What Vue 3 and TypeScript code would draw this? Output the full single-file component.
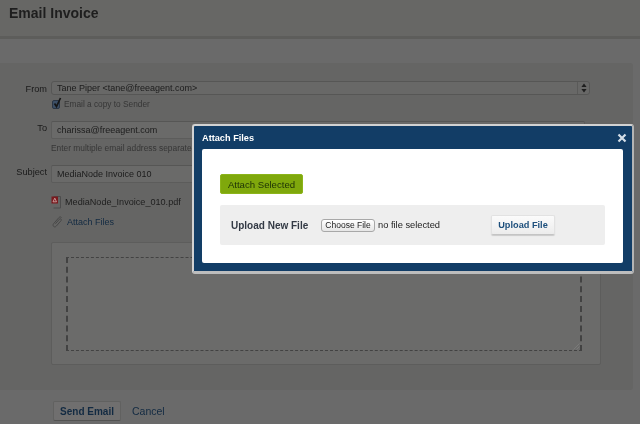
<script setup lang="ts">
import { ref } from 'vue'

const from = ref('Tane Piper <tane@freeagent.com>')
const to = ref('charissa@freeagent.com')
const subject = ref('MediaNode Invoice 010')
const attachment = ref('MediaNode_Invoice_010.pdf')
</script>

<template>
  <div class="page">
    <header class="header">
      <h1>Email Invoice</h1>
    </header>
    <div class="band"></div>

    <section class="panel">
      <div class="row from-row">
        <label>From</label>
        <div class="field">
          <div class="select">
            <span>{{ from }}</span>
            <span class="select-arrows">
              <svg width="6" height="10" viewBox="0 0 6 10"><path d="M3 0.5 L5.6 4 H0.4 Z M3 9.5 L5.6 6 H0.4 Z" fill="#1e1e1e" /></svg>
            </span>
          </div>
          <div class="copy">
            <span class="checkbox">
              <svg width="11" height="13" viewBox="0 0 11 13"><path d="M2.5 6.5 L4.5 9.5 L8.5 1" fill="none" stroke="#161616" stroke-width="1.7" /></svg>
            </span>
            Email a copy to Sender
          </div>
        </div>
      </div>

      <div class="row to-row">
        <label>To</label>
        <div class="field">
          <div class="input">{{ to }}</div>
          <div class="hint">Enter multiple email address separated by commas</div>
        </div>
      </div>

      <div class="row subject-row">
        <label>Subject</label>
        <div class="field">
          <div class="input">{{ subject }}</div>
          <div class="file">
            <svg width="11" height="14" viewBox="0 0 11 14">
              <path d="M2.5 1.5 H9.5 V13 H2.5" fill="none" stroke="#4c4c4c" />
              <rect x="0.5" y="1.5" width="6.5" height="7" fill="#7a1a1e" />
              <path d="M2 6.8 L3.8 3.2 L5.5 6.8 Z" fill="none" stroke="#d9b3b3" stroke-width="0.8" />
            </svg>
            {{ attachment }}
          </div>
          <div class="attach">
            <svg width="11" height="12" viewBox="0 0 11 12">
              <path d="M9.6 1.6 C8.7 0.6 7.6 0.8 6.8 1.7 L1.6 7.7 C0.8 8.7 0.9 9.8 1.7 10.5 C2.5 11.2 3.5 11 4.3 10.1 L9 4.7 C9.5 4.1 9.4 3.4 8.9 3 C8.4 2.6 7.8 2.7 7.3 3.3 L3.4 7.8" fill="none" stroke="#484848" stroke-width="1" />
            </svg>
            <a>Attach Files</a>
          </div>
        </div>
      </div>

      <div class="message">
        <div class="message-inner">
          <svg class="grip" width="7" height="7" viewBox="0 0 7 7"><path d="M0.5 6.5 L6.5 0.5 M3.5 6.5 L6.5 3.5" stroke="#7d7d7d" stroke-width="0.8" /></svg>
        </div>
      </div>
    </section>

    <footer class="footer">
      <button class="send">Send Email</button>
      <a class="cancel">Cancel</a>
    </footer>

    <div class="modal">
      <div class="modal-title">
        <span>Attach Files</span>
        <svg class="close" width="10" height="10" viewBox="0 0 10 10"><path d="M1.5 1.5 L8.5 8.5 M8.5 1.5 L1.5 8.5" stroke="#d5dfe8" stroke-width="2.2" /></svg>
      </div>
      <div class="modal-body">
        <button class="attach-selected">Attach Selected</button>
        <div class="upload">
          <strong>Upload New File</strong>
          <button class="choose">Choose File</button>
          <span class="no-file">no file selected</span>
          <button class="upload-btn">Upload File</button>
        </div>
      </div>
    </div>
  </div>
</template>

<style scoped>
.page {
  position: relative;
  width: 640px;
  height: 424px;
  overflow: hidden;
  display: flex;
  flex-direction: column;
  background: #6a6a6a;
  font-family: "Liberation Sans", Arial, sans-serif;
  font-size: 9px;
  color: #1c1c1c;
  filter: blur(0.3px);
}

.header {
  height: 36px;
  flex: none;
  background: #676765;
  border-bottom: 3px solid #5d5d5b;
  padding-left: 9px;
}

h1 {
  margin: 0;
  font-size: 14px;
  line-height: 26px;
  font-weight: bold;
  color: #1e1e1e;
}

.band {
  height: 24px;
  flex: none;
}

.panel {
  height: 327px;
  flex: none;
  width: 633px;
  box-sizing: border-box;
  padding-top: 18px;
  background: #656564;
  border-radius: 0 3px 3px 0;
}

.row {
  display: grid;
  grid-template-columns: 47px 1fr;
  column-gap: 4px;
}

label {
  text-align: right;
  line-height: 14px;
  color: #1a1a1a;
  font-size: 9.2px;
}

.from-row label {
  padding-top: 1px;
}

.select {
  box-sizing: border-box;
  width: 539px;
  height: 14px;
  display: flex;
  justify-content: space-between;
  align-items: center;
  padding-left: 5px;
  line-height: 13px;
  background: #686867;
  border: 1px solid #565655;
  border-radius: 3px;
  font-size: 9px;
}

.select-arrows {
  width: 11px;
  height: 12px;
  display: flex;
  align-items: center;
  justify-content: center;
  border-left: 1px solid #5a5a59;
}

.copy {
  display: flex;
  align-items: center;
  height: 12px;
  margin-top: 3px;
  color: #363636;
  font-size: 8.3px;
}

.checkbox {
  position: relative;
  box-sizing: border-box;
  width: 8px;
  height: 9px;
  margin: 0 4px 0 1px;
  background: #3c4f66;
  border: 1px solid #2a3544;
  border-radius: 2px;
}

.checkbox svg {
  position: absolute;
  left: -1px;
  top: -4px;
}

.to-row {
  margin-top: 11px;
}

.to-row label,
.subject-row label {
  line-height: 15px;
}

.input {
  box-sizing: border-box;
  width: 534px;
  height: 18px;
  line-height: 16px;
  padding-left: 5px;
  background: #6a6a69;
  border: 1px solid #5c5c5b;
  border-top-color: #565655;
  border-radius: 2px;
  font-size: 9px;
  color: #1c1c1c;
}

.hint {
  margin-top: 3px;
  line-height: 13px;
  font-size: 8.4px;
  color: #363636;
}

.subject-row {
  margin-top: 10px;
}

.file {
  display: flex;
  align-items: center;
  gap: 3px;
  height: 14px;
  margin-top: 12px;
  font-size: 9.1px;
  color: #1e1e1e;
}

.attach {
  display: flex;
  align-items: center;
  gap: 4px;
  height: 14px;
  margin-top: 6px;
  padding-left: 1px;
  font-size: 9px;
}

.attach a {
  color: #122a42;
}

.message {
  box-sizing: border-box;
  width: 550px;
  height: 123px;
  margin: 13px 0 0 51px;
  padding: 14px 18px 14px 14px;
  background: #6b6b6a;
  border: 1px solid #5d5d5c;
  border-radius: 2px;
}

.message-inner {
  position: relative;
  box-sizing: border-box;
  height: 94px;
  border-style: dashed;
  border-color: #424242;
  border-width: 1px 2px;
}

.grip {
  position: absolute;
  right: 0;
  bottom: 0;
}

.footer {
  flex: 1;
  display: flex;
  align-items: center;
  padding: 8px 0 0 53px;
}

.send {
  box-sizing: border-box;
  width: 68px;
  height: 20px;
  padding: 0;
  background: #706f6f;
  border: 1px solid #616160;
  border-bottom-color: #525251;
  border-radius: 2px;
  font: bold 10px "Liberation Sans", Arial, sans-serif;
  color: #122a42;
}

.cancel {
  margin-left: 11px;
  font-size: 10.5px;
  color: #122a42;
}

.modal {
  position: absolute;
  left: 192px;
  top: 124px;
  width: 442px;
  height: 150px;
  box-sizing: border-box;
  padding: 0 9px 8px 8px;
  background: #123d66;
  border: 2px solid #d2d2d2;
  border-bottom: 3px solid #bdbdbd;
  border-right-color: #b4b4b4;
  border-radius: 3px;
}

.modal-title {
  display: flex;
  justify-content: space-between;
  align-items: center;
  height: 23px;
  color: #fff;
  font-weight: bold;
  font-size: 9.2px;
}

.close {
  margin-right: -4px;
}

.modal-body {
  box-sizing: border-box;
  height: 114px;
  padding: 25px 18px 0 18px;
  background: #fff;
  border-radius: 2px;
}

.attach-selected {
  display: block;
  box-sizing: border-box;
  width: 83px;
  height: 20px;
  padding: 0;
  background: #7fa80c;
  border: 1px solid #8cb41a;
  border-radius: 2px;
  font: 9.6px "Liberation Sans", Arial, sans-serif;
  color: #1d3206;
}

.upload {
  display: flex;
  align-items: center;
  height: 40px;
  margin-top: 11px;
  padding-left: 11px;
  background: #eeeeee;
  border-radius: 2px;
}

.upload strong {
  width: 90px;
  font-size: 10px;
  color: #333a45;
}

.choose {
  box-sizing: border-box;
  width: 54px;
  height: 13px;
  padding: 0;
  background: linear-gradient(#ffffff, #e6e6e6);
  border: 1px solid #a8a8a8;
  border-radius: 3px;
  font: 8.5px "Liberation Sans", Arial, sans-serif;
  color: #222;
}

.no-file {
  width: 113px;
  margin-left: 3px;
  font-size: 9.3px;
  color: #222;
}

.upload-btn {
  box-sizing: border-box;
  width: 64px;
  height: 20px;
  padding: 0;
  background: linear-gradient(#fbfbfb, #ececec);
  border: 1px solid #e2e2e2;
  border-bottom-color: #c4c4c4;
  border-radius: 2px;
  box-shadow: 0 1px 1px rgba(0, 0, 0, 0.15);
  font: bold 9.2px "Liberation Sans", Arial, sans-serif;
  color: #1d4f7c;
}
</style>
